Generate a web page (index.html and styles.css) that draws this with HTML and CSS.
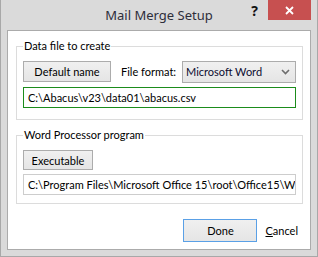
FILE: index.html
```html
<!DOCTYPE html>
<html lang="en">
<head>
  <meta charset="UTF-8">
  <title>Mail Merge Setup</title>
  <link rel="stylesheet" href="styles.css">
</head>
<body>
  <div class="window">
    <div class="titlebar">
      <span class="title">Mail Merge Setup</span>
      <div class="caption">
        <span class="help">?</span>
        <span class="close">
          <svg width="9" height="9" viewBox="0 0 9 9"><path d="M1 1 L8 8 M8 1 L1 8" stroke="#fff" stroke-width="1.8" fill="none"/></svg>
        </span>
      </div>
    </div>
    <div class="client">
      <fieldset class="group group-data">
        <legend>Data file to create</legend>
        <div class="row">
          <span class="btn btn-name">Default name</span>
          <span class="format-label">File format:</span>
          <div class="select">
            <span>Microsoft Word</span>
            <svg width="9" height="6" viewBox="0 0 9 6"><path d="M1 1 L4.5 4.5 L8 1" stroke="#6d6d6d" stroke-width="1.6" fill="none"/></svg>
          </div>
        </div>
        <div class="field field-focus">C:\Abacus\v23\data01\abacus.csv</div>
      </fieldset>
      <fieldset class="group group-wp">
        <legend>Word Processor program</legend>
        <div class="row">
          <span class="btn btn-exe">Executable</span>
        </div>
        <div class="field">C:\Program Files\Microsoft Office 15\root\Office15\WinWord.exe</div>
      </fieldset>
      <div class="actions">
        <span class="btn btn-done">Done</span>
        <span class="cancel"><u>C</u>ancel</span>
      </div>
    </div>
  </div>
</body>
</html>
```
FILE: styles.css
```css
body {
  margin: 0;
  font-family: Lato, "Noto Sans", sans-serif;
  font-size: 11px;
  color: #000;
}
.window {
  width: 318px;
  height: 257px;
  box-sizing: border-box;
  background: #dadada;
  border: 1px solid #a8a8a8;
  border-top: none;
  padding: 0 6px 6px;
  display: flex;
  flex-direction: column;
}
.titlebar {
  height: 30px;
  flex: none;
  display: grid;
  margin: 0 -6px;
}
.title, .caption {
  grid-area: 1 / 1;
}
.title {
  text-align: center;
  line-height: 30px;
  font-family: "Noto Sans", sans-serif;
  font-size: 13px;
  color: #2e2e3a;
}
.caption {
  justify-self: end;
  display: flex;
  align-items: flex-start;
  margin-right: 6px;
}
.help {
  font-family: "Noto Sans", sans-serif;
  font-weight: bold;
  font-size: 14px;
  line-height: 22px;
  margin-right: 10px;
  color: #111;
}
.close {
  width: 43px;
  height: 20px;
  background: #c75050;
  display: flex;
  align-items: center;
  justify-content: center;
}
.client {
  flex: 1;
  background: #fff;
  border: 1px solid #ababab;
  padding: 7px 7px 0 8px;
  display: flex;
  flex-direction: column;
  white-space: nowrap;
}
.group {
  margin: 0;
  border: 1px solid #dcdcdc;
  padding: 0 6px 11px 6px;
  min-width: 0;
}
.group legend {
  padding: 0 1px;
  line-height: 16px;
}
.group-wp {
  margin-top: 7px;
  padding-bottom: 8px;
}
.row {
  display: flex;
  align-items: center;
  margin-top: 7px;
  height: 21px;
}
.btn {
  display: flex;
  align-items: center;
  justify-content: center;
  height: 21px;
  box-sizing: border-box;
  border: 1px solid #acacac;
  background: linear-gradient(#f0f0f0, #e5e5e5);
}
.btn-name {
  width: 88px;
}
.group-wp .row {
  height: 20px;
}
.btn-exe {
  width: 70px;
  height: 20px;
}
.format-label {
  margin-left: 10px;
}
.select {
  margin-left: auto;
  width: 114px;
  height: 22px;
  box-sizing: border-box;
  border: 1px solid #acacac;
  background: linear-gradient(#f0f0f0, #e5e5e5);
  display: flex;
  align-items: center;
  justify-content: space-between;
  padding: 0 5px 0 3px;
  color: #0c0c30;
}
.field {
  margin-top: 5px;
  height: 21px;
  box-sizing: border-box;
  border: 1px solid #cdcdcd;
  padding: 0 4px;
  line-height: 19px;
  overflow: hidden;
}
.group-wp .field {
  margin-top: 4px;
}
.field-focus {
  border-color: #1b8c1b;
}
.actions {
  margin-top: 15px;
  display: flex;
  align-items: center;
  padding-right: 5px;
}
.btn-done {
  margin-left: auto;
  width: 74px;
  height: 23px;
  border-color: #5aa0e6;
}
.cancel {
  margin-left: 8px;
}
```
